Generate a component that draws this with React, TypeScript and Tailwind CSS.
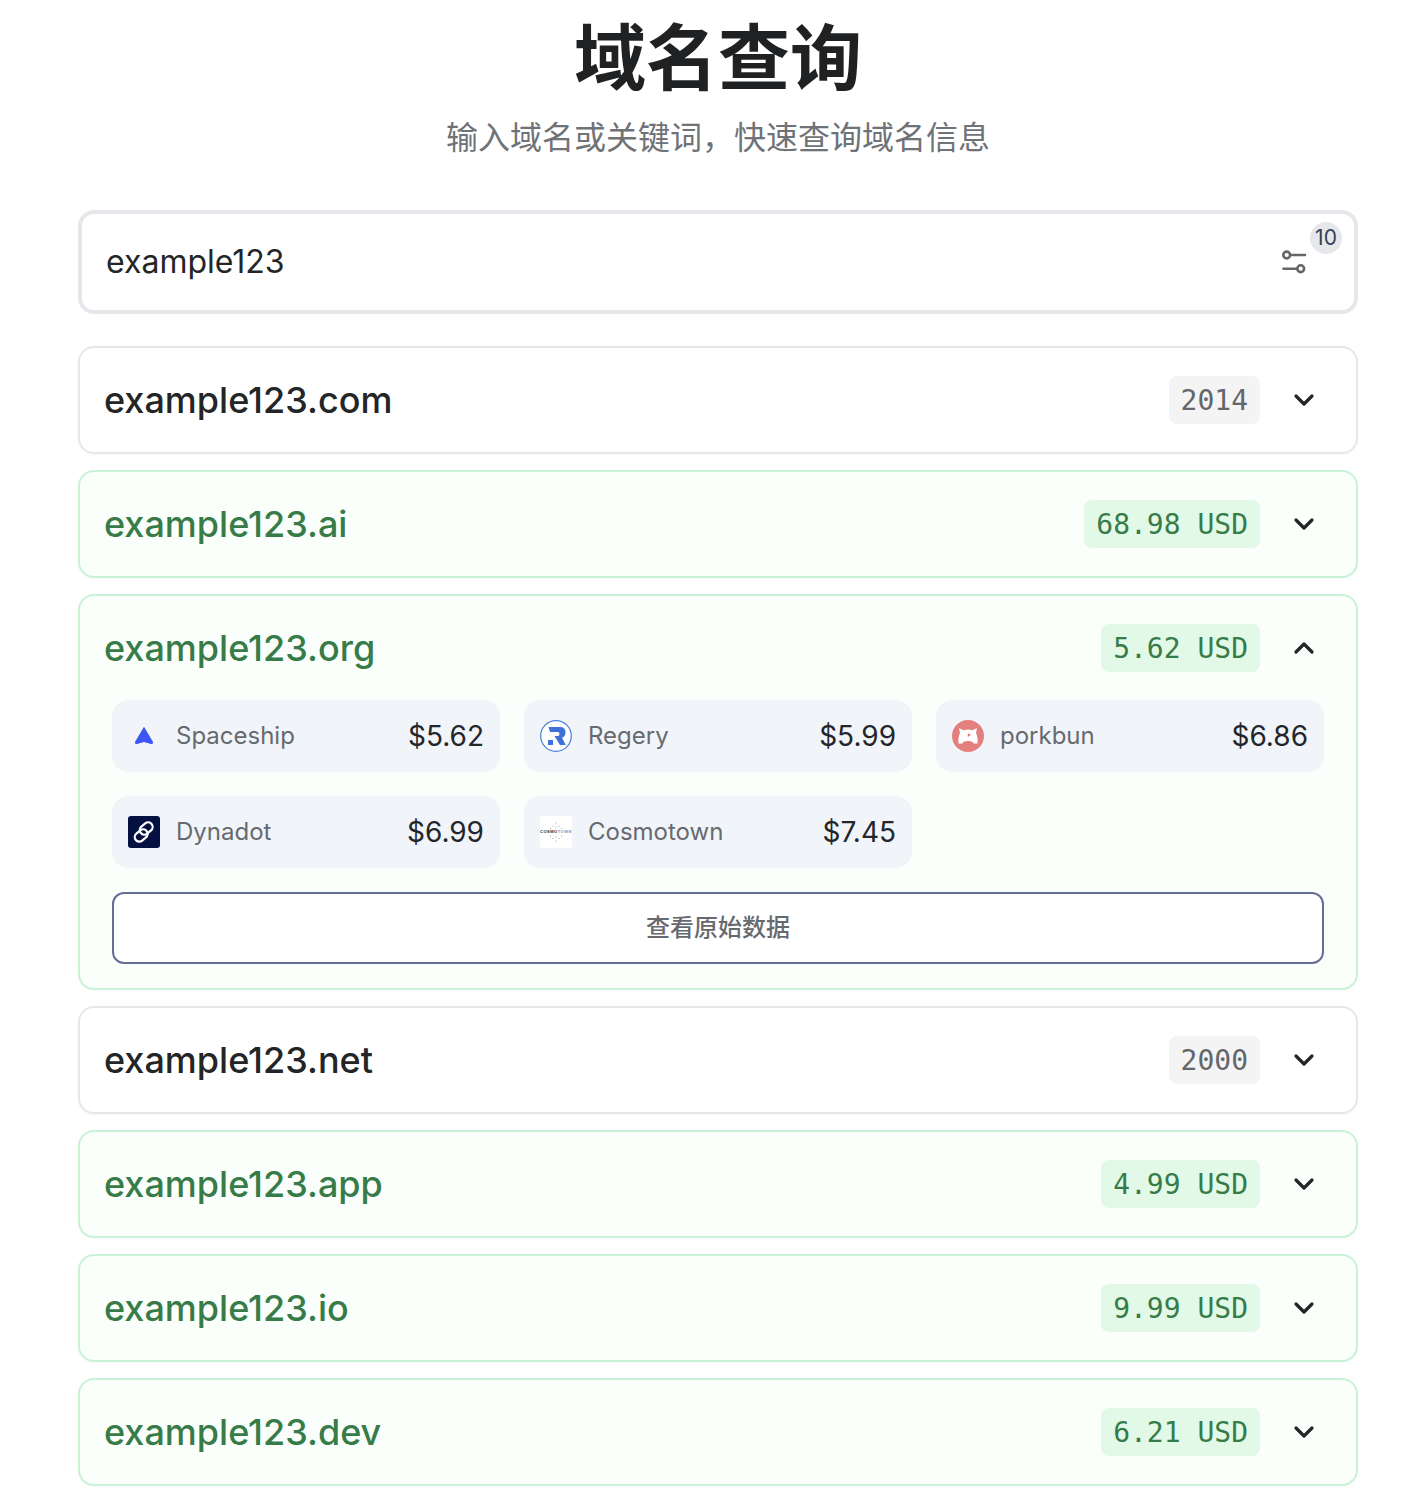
import { ChevronDown, ChevronUp } from 'lucide-react';
import { ReactNode } from 'react';

const sans = 'font-[Inter,"Noto_Sans_CJK_SC",sans-serif]';

type Domain = { name: string; tag: string; ok: boolean; open?: boolean };

const domains: Domain[] = [
    { name: 'example123.com', tag: '2014', ok: false },
    { name: 'example123.ai', tag: '68.98 USD', ok: true },
    { name: 'example123.org', tag: '5.62 USD', ok: true, open: true },
    { name: 'example123.net', tag: '2000', ok: false },
    { name: 'example123.app', tag: '4.99 USD', ok: true },
    { name: 'example123.io', tag: '9.99 USD', ok: true },
    { name: 'example123.dev', tag: '6.21 USD', ok: true },
];

function Spaceship() {
    return (
        <svg viewBox="0 0 32 32" className="size-8">
            <path d="M16 7.500 L24.500 22 Q25 24 23 23.500 L16 21.500 L9 23.500 Q7 24 7.500 22 Z" fill="#3d55f5" stroke="#3d55f5" strokeWidth="1" strokeLinejoin="round" />
        </svg>
    );
}

function Regery() {
    return (
        <svg viewBox="0 0 32 32" className="size-8">
            <circle cx="16" cy="16" r="15.300" fill="#fff" stroke="#4a7fdc" strokeWidth="1.200" />
            <path d="M8.500 7 H20 Q25.500 7 25.500 12.500 Q25.500 16.500 22 17.800 L25.800 25 H20 L14.500 16 H17.800 Q19.500 16 19.500 14 Q19.500 12 17.800 12 H10 Z" fill="#3d73d8" />
            <rect x="8" y="20" width="5" height="5" fill="#3d73d8" />
        </svg>
    );
}

function Porkbun() {
    return (
        <svg viewBox="0 0 32 32" className="size-8">
            <circle cx="16" cy="16" r="16" fill="#e37f7c" />
            <path d="M7 8 L11.500 10.300 Q16 8.500 20.500 10.300 L25 8 L24 13 Q26 17 25.500 23.500 H21.500 Q21.500 21 16 21 Q10.500 21 10.500 23.500 H6.500 Q6 17 8 13 Z" fill="#fff" />
            <path d="M15.800 13 L19 15 L15.800 17 Z" fill="#e37f7c" />
        </svg>
    );
}

function Dynadot() {
    return (
        <svg viewBox="0 0 32 32" className="size-8">
            <rect width="32" height="32" rx="3" fill="#04103f" />
            <g fill="none" stroke="#fff" strokeWidth="2.200">
                <rect x="6.200" y="15" width="14" height="9" rx="4.500" transform="rotate(-40 13.200 19.500)" />
                <rect x="11.200" y="8" width="14" height="9" rx="4.500" transform="rotate(-40 18.200 12.500)" />
            </g>
        </svg>
    );
}

function Cosmotown() {
    const dots = [[16, 7], [13, 10], [19, 10], [10.5, 12.5], [21.5, 12.5], [10.5, 20], [21.5, 20], [13, 22.5], [19, 22.5], [16, 25], [16, 11], [16, 21]];
    return (
        <svg viewBox="0 0 32 32" className="size-8">
            <rect width="32" height="32" fill="#fff" />
            {dots.map(([x, y], i) => <circle key={i} cx={x} cy={y} r="0.500" fill="#8a8f96" />)}
            <text x="16" y="17.300" textAnchor="middle" fontSize="4" fontWeight="700" letterSpacing="0.500" fontFamily="Liberation Sans, sans-serif" fill="#222">
                COSMO<tspan fill="#6d9cc8">TOWN</tspan>
            </text>
        </svg>
    );
}

function Price({ icon, name, price }: { icon: ReactNode; name: string; price: string }) {
    return (
        <div className="flex h-[72px] items-center rounded-2xl bg-[#f1f5fa] px-4">
            {icon}
            <span className="ml-4 text-[24px] text-[#666a6f]">{name}</span>
            <span className="ml-auto text-[28px] text-[#24262a]">{price}</span>
        </div>
    );
}

function Card({ d }: { d: Domain }) {
    return (
        <div className={'rounded-2xl border-2 px-6 shadow-[0_1px_2px_rgba(0,0,0,0.03)] ' + (d.ok ? 'border-[#c8f2d4] bg-[#fafffb]' : 'border-[#e5e7eb] bg-white')}>
            <div className="flex h-[104px] items-center">
                <span className={'text-[36px] font-medium ' + (d.ok ? 'text-[#377c48]' : 'text-[#232527]')}>{d.name}</span>
                <span className={'ml-auto flex h-12 items-center rounded-lg px-3 pt-0.5 font-["DejaVu_Sans_Mono",monospace] text-[28px] ' + (d.ok ? 'bg-[#e2f9e8] text-[#377c48]' : 'bg-[#f4f4f5] text-[#63666b]')}>{d.tag}</span>
                <span className="ml-7 mr-3 text-[#232527]">
                    {d.open ? <ChevronUp size={32} strokeWidth={2.400} /> : <ChevronDown size={32} strokeWidth={2.400} />}
                </span>
            </div>
            {d.open && (
                <div className="px-2 pb-6">
                    <div className="grid grid-cols-3 gap-6">
                        <Price icon={<Spaceship />} name="Spaceship" price="$5.62" />
                        <Price icon={<Regery />} name="Regery" price="$5.99" />
                        <Price icon={<Porkbun />} name="porkbun" price="$6.86" />
                        <Price icon={<Dynadot />} name="Dynadot" price="$6.99" />
                        <Price icon={<Cosmotown />} name="Cosmotown" price="$7.45" />
                    </div>
                    <button className="mt-6 flex h-[72px] w-full items-center justify-center rounded-xl border-2 border-[#666d94] bg-white text-[24px] font-medium text-[#666a6f]">
                        查看原始数据
                    </button>
                </div>
            )}
        </div>
    );
}

export default function App() {
    return (
        <div className={'min-h-[1492px] bg-white pl-[78px] pr-[50px] ' + sans}>
            <h1 className="pt-[14px] text-center text-[72px] leading-[88px] font-bold text-[#1f2123]">域名查询</h1>
            <p className="mt-[12px] text-center text-[32px] leading-[48px] text-[#6f7276]">输入域名或关键词，快速查询域名信息</p>

            <div className="relative mt-[48px] flex h-[104px] items-center rounded-2xl border-4 border-[#e5e7eb] bg-white pl-6">
                <span className="text-[32px] text-[#232527]">example123</span>
                <svg viewBox="0 0 26 26" className="absolute top-[36px] right-[47px] size-[26px]" fill="none" stroke="#666" strokeWidth="2.600" strokeLinecap="round">
                    <circle cx="5.700" cy="5" r="3.400" />
                    <circle cx="19.700" cy="18.700" r="3.400" />
                    <path d="M9.500 5 H24 M2.500 18.700 H16" />
                </svg>
                <span className="absolute top-2 right-[12px] flex size-8 items-center justify-center rounded-full bg-[#e5e7eb] text-[21px] text-[#374151]">10</span>
            </div>

            <div className="mt-8 flex flex-col gap-4">
                {domains.map((d) => <Card key={d.name} d={d} />)}
            </div>
        </div>
    );
}
